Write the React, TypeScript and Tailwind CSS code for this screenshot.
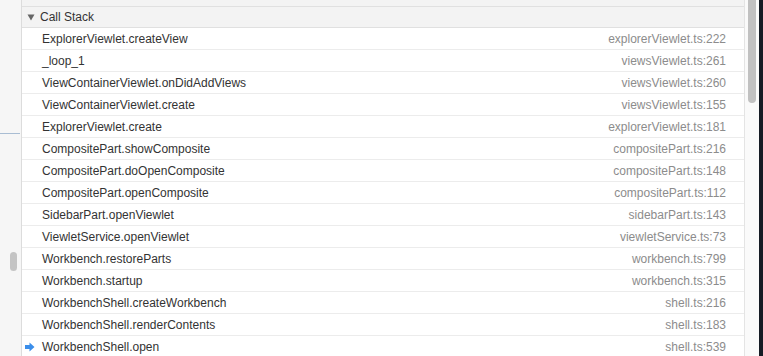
import React from "react";

const frames: [string, string][] = [
  ["ExplorerViewlet.createView", "explorerViewlet.ts:222"],
  ["_loop_1", "viewsViewlet.ts:261"],
  ["ViewContainerViewlet.onDidAddViews", "viewsViewlet.ts:260"],
  ["ViewContainerViewlet.create", "viewsViewlet.ts:155"],
  ["ExplorerViewlet.create", "explorerViewlet.ts:181"],
  ["CompositePart.showComposite", "compositePart.ts:216"],
  ["CompositePart.doOpenComposite", "compositePart.ts:148"],
  ["CompositePart.openComposite", "compositePart.ts:112"],
  ["SidebarPart.openViewlet", "sidebarPart.ts:143"],
  ["ViewletService.openViewlet", "viewletService.ts:73"],
  ["Workbench.restoreParts", "workbench.ts:799"],
  ["Workbench.startup", "workbench.ts:315"],
  ["WorkbenchShell.createWorkbench", "shell.ts:216"],
  ["WorkbenchShell.renderContents", "shell.ts:183"],
  ["WorkbenchShell.open", "shell.ts:539"],
];

function CurrentArrow() {
  return (
    <svg width="10" height="10" viewBox="0 0 10 10" className="shrink-0">
      <path d="M0 3h4.5V0.5L9.5 5l-5 4.5V7H0z" fill="#3b8eea" />
    </svg>
  );
}

function Twistie() {
  return (
    <svg width="8" height="7" viewBox="0 0 8 7" className="shrink-0">
      <path d="M0.5 0.5h7L4 6.5z" fill="#666" />
    </svg>
  );
}

export default function App() {
  return (
    <div
      className="flex h-[356px] w-[763px] overflow-hidden bg-white text-[12px]"
      style={{ fontFamily: '"Liberation Sans", Arial, sans-serif' }}
    >
      {/* left gutter */}
      <div className="relative w-[22px] shrink-0 border-r border-[#dcdcdc] bg-[#f6f6f6]">
        <div className="absolute left-0 top-[133px] h-px w-[20px] bg-[#a9bdd3]" />
        <div className="absolute left-[10px] top-[252px] h-[19px] w-[7px] rounded-full bg-[#c4c4c4]" />
      </div>

      {/* call stack panel */}
      <div className="flex w-[723px] shrink-0 flex-col border-r border-[#e4e4e4]">
        <div className="h-[7px] shrink-0 border-b border-[#e0e0e0] bg-[#f3f3f3]" />
        <div className="flex h-[21px] shrink-0 items-center gap-[5px] border-b border-[#e0e0e0] bg-[#f3f3f3] pl-[5px] text-[#333]">
          <Twistie />
          <span>Call Stack</span>
        </div>
        {frames.map(([name, file], i) => (
          <div
            key={name}
            className="relative flex h-[22px] shrink-0 items-center justify-between border-b border-[#ececec] pl-[20px] pr-[18px]"
          >
            {i === frames.length - 1 && (
              <div className="absolute left-[3px] top-[6px]">
                <CurrentArrow />
              </div>
            )}
            <span className="text-[#333]">{name}</span>
            <span className="text-[#8c8c8c]">{file}</span>
          </div>
        ))}
      </div>

      {/* scrollbar */}
      <div className="w-[14px] shrink-0 bg-[#fafafa] pl-[3px]">
        <div className="h-[103px] w-[8px] rounded-b-full bg-[#c1c1c1]" />
      </div>
      <div className="w-[4px] shrink-0 bg-[#151b24]" />
    </div>
  );
}
